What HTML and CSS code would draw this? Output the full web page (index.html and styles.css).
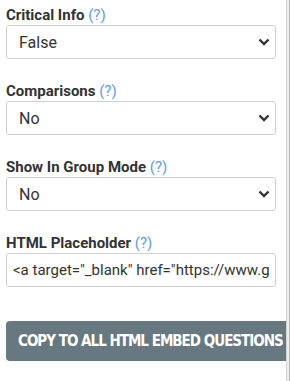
FILE: index.html
```html
<!DOCTYPE html>
<html lang="en">

<head>
    <meta charset="UTF-8">
    <meta name="viewport" content="width=device-width, initial-scale=1.0">
    <title>Question Settings</title>
    <link rel="stylesheet" href="styles.css">
</head>

<body>
    <div class="contenedor">
        <div class="panel">
            <div class="campo">
                <label class="etiqueta">Critical Info <span class="ayuda">(?)</span></label>
                <div class="selector">
                    <select>
                        <option>False</option>
                        <option>True</option>
                    </select>
                    <svg class="flecha" width="12" height="8" viewBox="0 0 12 8"><path d="M1.5 1.5 L6 6 L10.5 1.5" fill="none" stroke="#333" stroke-width="2.4"/></svg>
                </div>
            </div>
            <div class="campo">
                <label class="etiqueta">Comparisons <span class="ayuda">(?)</span></label>
                <div class="selector">
                    <select>
                        <option>No</option>
                        <option>Yes</option>
                    </select>
                    <svg class="flecha" width="12" height="8" viewBox="0 0 12 8"><path d="M1.5 1.5 L6 6 L10.5 1.5" fill="none" stroke="#333" stroke-width="2.4"/></svg>
                </div>
            </div>
            <div class="campo">
                <label class="etiqueta">Show In Group Mode <span class="ayuda">(?)</span></label>
                <div class="selector">
                    <select>
                        <option>No</option>
                        <option>Yes</option>
                    </select>
                    <svg class="flecha" width="12" height="8" viewBox="0 0 12 8"><path d="M1.5 1.5 L6 6 L10.5 1.5" fill="none" stroke="#333" stroke-width="2.4"/></svg>
                </div>
            </div>
            <div class="campo">
                <label class="etiqueta">HTML Placeholder <span class="ayuda">(?)</span></label>
                <input class="entrada" type="text" value='&lt;a target="_blank" href="https://www.google.com"&gt;'>
            </div>
            <button class="boton-copiar">COPY TO ALL HTML EMBED QUESTIONS</button>
        </div>
        <div class="barra"></div>
    </div>
</body>

</html>
```

FILE: styles.css
```css
* {
    margin: 0;
    padding: 0;
    box-sizing: border-box;
}

body {
    font-family: Roboto, "Liberation Sans", sans-serif;
    background-color: #fff;
    color: #333;
}

.contenedor {
    display: flex;
    height: 381px;
}

.panel {
    width: 286px;
    overflow: hidden;
    padding: 5px 10px 0 6px;
}

.barra {
    width: 4px;
    background-color: #ececec;
    border-left: 1px solid #d6d6d6;
    border-right: 1px solid #b8b8b8;
}

.campo {
    margin-bottom: 22px;
}

.etiqueta {
    display: block;
    font-size: 15px;
    line-height: 20px;
    font-weight: bold;
    color: #333;
}

.ayuda {
    font-weight: normal;
    color: #5b9cf0;
}

.selector {
    position: relative;
}

.selector select {
    appearance: none;
    -webkit-appearance: none;
    width: 100%;
    height: 34px;
    padding: 0 30px 0 12px;
    font-family: Roboto, "Liberation Sans", sans-serif;
    font-size: 16px;
    color: #333;
    background-color: #fff;
    border: 1px solid #cfcfcf;
    border-radius: 3px;
}

.flecha {
    position: absolute;
    right: 6px;
    top: 13px;
    pointer-events: none;
}

.entrada {
    width: 100%;
    height: 34px;
    padding: 0 6px;
    font-family: Roboto, "Liberation Sans", sans-serif;
    font-size: 15px;
    color: #333;
    border: 1px solid #cfcfcf;
    border-radius: 3px;
}

.boton-copiar {
    display: block;
    margin-top: 34px;
    height: 40px;
    padding: 0 12px;
    white-space: nowrap;
    background-color: #687880;
    color: #fff;
    border: none;
    border-radius: 4px;
    font-family: "Liberation Sans Narrow", "DejaVu Sans Condensed", Roboto, sans-serif;
    font-stretch: condensed;
    font-weight: bold;
    font-size: 15px;
    letter-spacing: -1px;
}
```
